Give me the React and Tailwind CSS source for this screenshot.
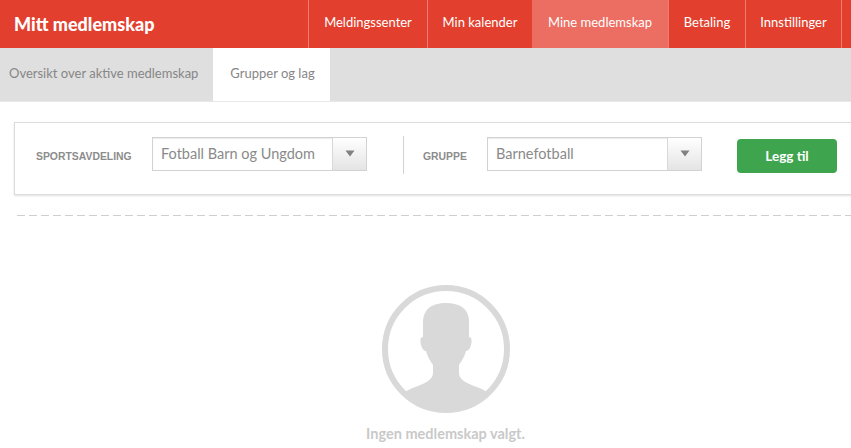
import React from "react";

const navItems = [
  { label: "Meldingssenter", width: "w-[119px]" },
  { label: "Min kalender", width: "w-[105px]" },
  { label: "Mine medlemskap", width: "w-[136px]", active: true },
  { label: "Betaling", width: "w-[77px]" },
  { label: "Innstillinger", width: "w-[96px]" },
];

const Select = ({ value }) => (
  <div className="flex h-[34px] w-[215px] border border-[#d2d2d2] bg-white shadow-[inset_0_1px_1px_rgba(0,0,0,0.08)]">
    <div className="flex-1 pl-2 pt-[7px] text-[14.5px] leading-[18px] text-[#8a8a8a]">
      {value}
    </div>
    <div className="flex w-[34px] items-center justify-center border-l border-[#d8d8d8] bg-gradient-to-b from-white to-[#e4e4e4]">
      <svg width="10" height="7" viewBox="0 0 10 7" className="mb-[2px]">
        <path d="M0.5 0.5h9L5 6.5z" fill="#808080" />
      </svg>
    </div>
  </div>
);

const Avatar = () => (
  <svg width="128" height="128" viewBox="0 0 128 128">
    <defs>
      <clipPath id="disc">
        <circle cx="64" cy="64" r="59" />
      </clipPath>
    </defs>
    <circle cx="64" cy="64" r="61" fill="none" stroke="#d9d9d9" strokeWidth="6" />
    <g clipPath="url(#disc)" fill="#d9d9d9">
      <path d="M64 18C50 18 41 24 41 38L41 52C38 52 38 56 39 60C40 64 42 66 44 66C46 73 49 77 51 80L51 88C51 94 44 98 36 101C30 103 26 105 23 107L0 128H128L105 107C102 105 98 103 92 101C84 98 77 94 77 88L77 80C79 77 82 73 84 66C86 66 88 64 89 60C90 56 90 52 87 52L87 36C87 24 78 18 64 18z" />
    </g>
  </svg>
);

export default function App() {
  return (
    <div className="h-[448px] w-[851px] overflow-hidden bg-white font-['Lato',sans-serif]">
      {/* top bar */}
      <header className="flex h-[48px] items-center justify-between bg-[#e23f2e] text-white">
        <h1 className="pl-[14px] text-[18px] font-black">Mitt medlemskap</h1>
        <nav className="flex h-full pr-[9px]">
          {navItems.map((item) => (
            <a
              key={item.label}
              className={`flex h-full items-center justify-center border-l border-[#ee7c70] pb-[2px] text-[13px] ${item.width} ${
                item.active ? "border-l-0 bg-[#ec6d61]" : ""
              }`}
            >
              {item.label}
            </a>
          ))}
          <div className="h-full border-l border-[#ee7c70]" />
        </nav>
      </header>

      {/* tabs */}
      <div className="flex h-[54px] border-b border-[#e8e8e8] bg-[#dfdfdf] text-[13px] text-[#868686]">
        <div className="flex w-[213px] items-center pl-[9px] pb-[1px]">
          Oversikt over aktive medlemskap
        </div>
        <div className="flex w-[117px] items-center justify-center bg-white pb-[1px] pl-[2px]">
          Grupper og lag
        </div>
      </div>

      {/* filter card */}
      <div className="mt-[20px] ml-[14px] flex h-[73px] w-[860px] items-start border border-[#dcdcdc] bg-white pt-[14px] shadow-[0_1px_2px_rgba(0,0,0,0.12)]">
        <label className="ml-[21px] w-[116px] pt-[13px] font-['Liberation_Sans',sans-serif] text-[10.4px] leading-[13px] font-bold text-[#8c8c8c]">
          SPORTSAVDELING
        </label>
        <Select value="Fotball Barn og Ungdom" />
        <div className="mx-[36px] -mt-[1px] h-[38px] w-px bg-[#d2d2d2]" />
        <label className="-ml-[17px] w-[64px] pt-[13px] font-['Liberation_Sans',sans-serif] text-[10.4px] leading-[13px] font-bold text-[#8c8c8c]">
          GRUPPE
        </label>
        <Select value="Barnefotball" />
        <button className="mt-[2px] ml-[35px] h-[34px] w-[100px] rounded-[4px] bg-[#3ea44e] text-[13.5px] font-bold text-white">
          Legg til
        </button>
      </div>

      {/* dashed separator with long dashes */}
      <div className="mt-[20px] ml-[17px] h-px bg-[repeating-linear-gradient(to_right,#cfcfcf_0,#cfcfcf_8px,transparent_8px,transparent_12px)]" />

      {/* empty state */}
      <div className="mt-[69px] flex flex-col items-center pl-[41px]">
        <Avatar />
        <p className="mt-[11px] pr-[1px] text-[14.5px] leading-[20px] font-bold text-[#c9c9c9]">
          Ingen medlemskap valgt.
        </p>
      </div>
    </div>
  );
}
